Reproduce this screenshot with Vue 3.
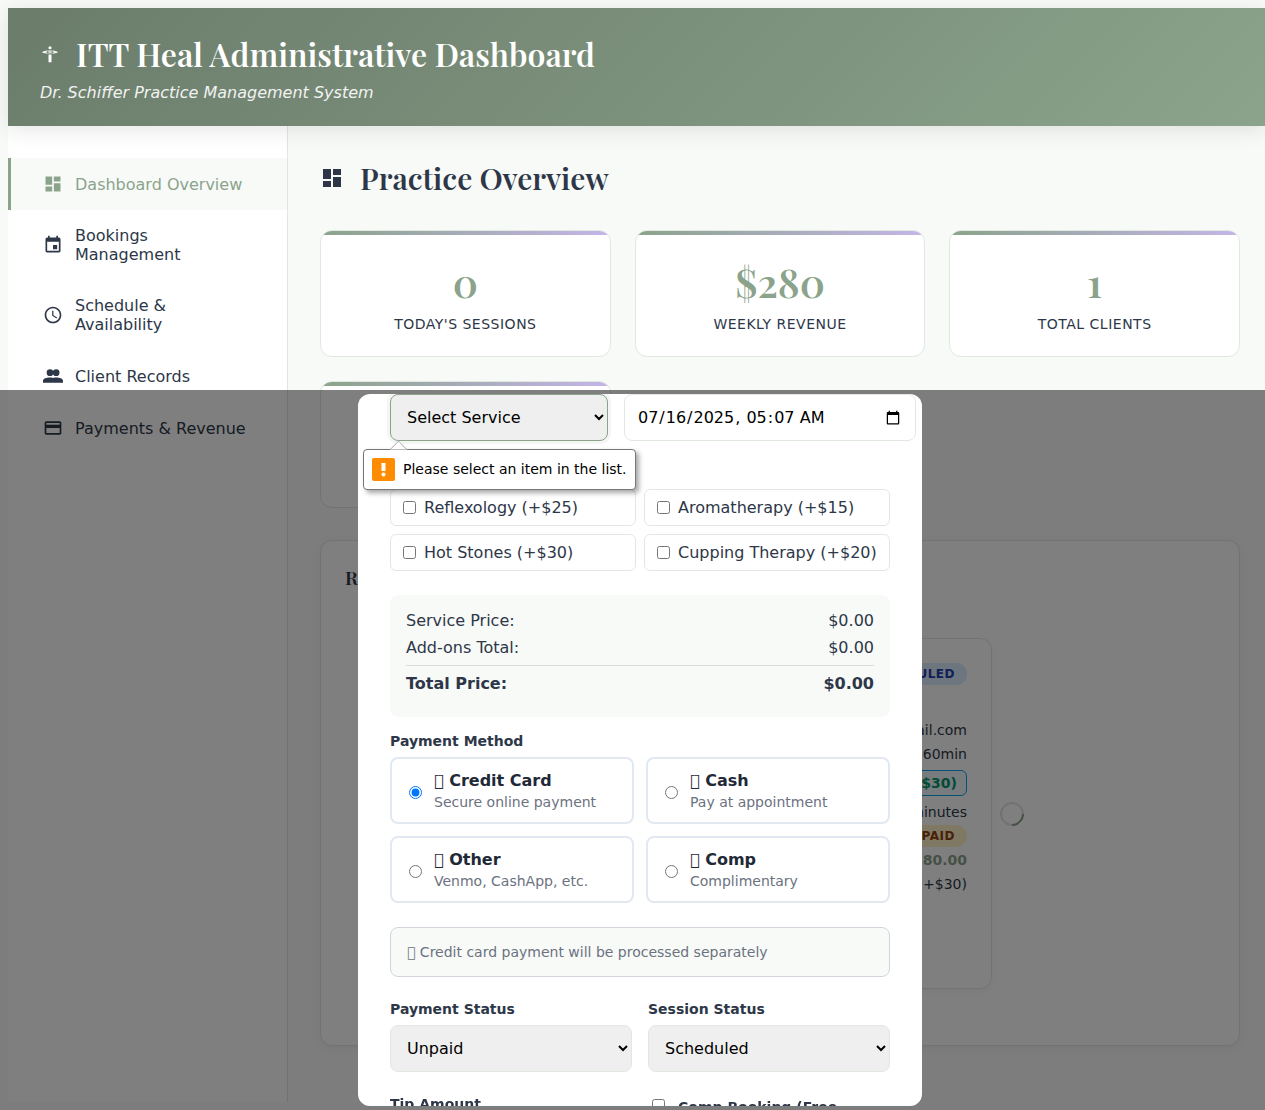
<script setup>
import { ref } from 'vue'

const icons = {
  dashboard: 'M3 13h8V3H3v10zm0 8h8v-6H3v6zm10 0h8V11h-8v10zm0-18v6h8V3h-8z',
  event: 'M17 12h-5v5h5v-5zM16 1v2H8V1H6v2H5c-1.11 0-1.99.9-1.99 2L3 19c0 1.1.89 2 2 2h14c1.1 0 2-.9 2-2V5c0-1.1-.9-2-2-2h-1V1h-2zm3 18H5V8h14v11z',
  clock: 'M11.99 2C6.47 2 2 6.48 2 12s4.47 10 9.99 10C17.52 22 22 17.52 22 12S17.52 2 11.99 2zM12 20c-4.42 0-8-3.58-8-8s3.58-8 8-8 8 3.58 8 8-3.58 8-8 8zm.5-13H11v6l5.25 3.15.75-1.23-4.5-2.67z',
  people: 'M8.400 4a4 4 0 1 0 0 8 4 4 0 0 0 0-8zM15.800 4a4 4 0 1 0 0 8 4 4 0 0 0 0-8zM0 20v-2.200c0-2.600 4-4 8-4 1.600 0 3 .2 4 .6 1-.4 2.400-.6 4-.6 4 0 8 1.400 8 4V20z',
  card: 'M20 4H4c-1.110 0-1.990.89-1.990 2L2 18c0 1.110.89 2 2 2h16c1.110 0 2-.89 2-2V6c0-1.110-.89-2-2-2zm0 14H4v-6h16v6zm0-10H4V6h16v2z'
}

const nav = [
  { label: 'Dashboard Overview', icon: icons.dashboard },
  { label: 'Bookings Management', icon: icons.event },
  { label: 'Schedule & Availability', icon: icons.clock },
  { label: 'Client Records', icon: icons.people },
  { label: 'Payments & Revenue', icon: icons.card }
]
const stats = [
  { value: '0', label: "Today's Sessions" },
  { value: '$280', label: 'Weekly Revenue' },
  { value: '1', label: 'Total Clients' },
  { value: '', label: '' }
]
const addons = ['Reflexology (+$25)', 'Aromatherapy (+$15)', 'Hot Stones (+$30)', 'Cupping Therapy (+$20)']
const glyph = '\u{F8FE}'
const methods = [
  { id: 'card', title: 'Credit Card', note: 'Secure online payment' },
  { id: 'cash', title: 'Cash', note: 'Pay at appointment' },
  { id: 'other', title: 'Other', note: 'Venmo, CashApp, etc.' },
  { id: 'comp', title: 'Comp', note: 'Complimentary' }
]
const method = ref('card')
const when = ref('2025-07-16T05:07')
</script>

<template>
  <div class="page">
    <header class="banner">
      <h1>
        <svg class="cross" viewBox="0 0 24 24" aria-hidden="true">
          <circle cx="12" cy="4.500" r="1.900" />
          <path d="M10.200 12.500h3.600V22h-3.600zM10.200 7.500h1.400v4h-1.400zM12.400 7.500h1.400v4h-1.400z" />
          <path d="M3 9.200l6-1.700v1.400L6 9.500l3 .9v1.300l-6-1.300zM21 9.200l-6-1.700v1.400l3 .6-3 .9v1.300l6-1.300z" />
        </svg>
        ITT Heal Administrative Dashboard
      </h1>
      <p>Dr. Schiffer Practice Management System</p>
    </header>

    <div class="layout">
      <nav class="sidebar">
        <a v-for="(item, i) in nav" :key="item.label" href="#" class="nav-item" :class="{ active: i === 0 }">
          <svg viewBox="0 0 24 24" aria-hidden="true"><path :d="item.icon" /></svg>
          <span>{{ item.label }}</span>
        </a>
      </nav>

      <main class="content">
        <h2>
          <svg viewBox="0 0 24 24" aria-hidden="true"><path :d="icons.dashboard" /></svg>
          Practice Overview
        </h2>
        <div class="stats">
          <div v-for="(s, i) in stats" :key="i" class="stat">
            <div class="value">{{ s.value }}</div>
            <div class="caption">{{ s.label }}</div>
          </div>
        </div>

        <section class="recent">
          <h3>Recent Bookings</h3>
          <div class="recent-body">
            <article class="booking">
              <div class="booking-head"><span class="badge scheduled">Scheduled</span></div>
              <div class="line">client@gmail.com</div>
              <div class="line">60min</div>
              <div class="line addon"><span>Hot Stones (+$30)</span></div>
              <div class="line">60 minutes</div>
              <div class="line"><span class="badge unpaid">Unpaid</span></div>
              <div class="line amount">$280.00</div>
              <div class="line">Hot Stones (+$30)</div>
            </article>
            <div class="spinner"></div>
          </div>
        </section>
      </main>
    </div>

    <div class="overlay">
      <form class="modal" @submit.prevent>
        <div class="service-row">
          <div class="service">
            <select aria-label="Service" class="field focused"><option>Select Service</option></select>
            <div class="tip" role="alert">
              <span class="tip-icon">
                <svg viewBox="0 0 23 23" aria-hidden="true"><path d="M9.500 5h4v8h-4z" /><circle cx="11.500" cy="16.500" r="2" /></svg>
              </span>
              Please select an item in the list.
            </div>
          </div>
          <input v-model="when" aria-label="Date and time" class="field when" type="datetime-local" />
        </div>

        <div class="addons" role="group" aria-label="Add-ons">
          <label v-for="a in addons" :key="a" class="addon-box"><input type="checkbox" />{{ a }}</label>
        </div>

        <div class="totals">
          <div><span>Service Price:</span><span>$0.00</span></div>
          <div><span>Add-ons Total:</span><span>$0.00</span></div>
          <div class="total"><span>Total Price:</span><span>$0.00</span></div>
        </div>

        <div class="group">
          <span class="label">Payment Method</span>
          <div class="methods">
            <label v-for="m in methods" :key="m.id" class="method">
              <input v-model="method" type="radio" name="method" :value="m.id" />
              <span>
                <strong><span class="glyph">{{ glyph }}</span> {{ m.title }}</strong>
                <small>{{ m.note }}</small>
              </span>
            </label>
          </div>
        </div>

        <div class="notice">{{ glyph }} Credit card payment will be processed separately</div>

        <div class="pair">
          <div>
            <label class="label" for="payment-status">Payment Status</label>
            <select id="payment-status" class="field"><option>Unpaid</option></select>
          </div>
          <div>
            <label class="label" for="session-status">Session Status</label>
            <select id="session-status" class="field"><option>Scheduled</option></select>
          </div>
        </div>

        <div class="pair">
          <div>
            <label class="label" for="tip-amount">Tip Amount</label>
            <input id="tip-amount" class="field" type="number" />
          </div>
          <label class="comp"><input type="checkbox" />Comp Booking (Free</label>
        </div>
      </form>
    </div>
  </div>
</template>

<style>
html, body { background: #f8faf8; }
body { overflow: hidden; }
</style>

<style scoped>
* { box-sizing: border-box; }
.page {
  display: flex;
  flex-direction: column;
  min-height: 100vh;
  padding: 8px 0 8px 8px;
  font-family: "DejaVu Sans", sans-serif;
  font-size: 16px;
  line-height: 19px;
  color: #2d3748;
}
svg { flex: none; fill: currentColor; }
h1, h2, h3, p { margin: 0; }
h1, h2, h3, .value { font-family: "Playfair Display", "Liberation Serif", serif; font-weight: 600; }

.banner {
  position: relative;
  padding: 24px 32px;
  color: #fff;
  background: linear-gradient(135deg, #6b7c6b 0%, #8ba38b 100%);
  box-shadow: 0 4px 20px rgba(0, 0, 0, 0.1);
}
h1 {
  display: flex;
  align-items: center;
  gap: 16px;
  font-size: 32px;
  line-height: 43px;
}
.cross { width: 20px; height: 20px; }
.banner p { margin-top: 8px; font-style: italic; opacity: 0.9; }

.layout { display: flex; flex: 1; }
.sidebar {
  flex: none;
  width: 280px;
  padding-top: 32px;
  background: #fff;
  border-right: 1px solid #e2e6e2;
}
.nav-item {
  display: flex;
  align-items: center;
  gap: 12px;
  padding: 16px 32px;
  border-left: 3px solid transparent;
  color: #2d3748;
  text-decoration: none;
}
.nav-item svg { width: 20px; height: 20px; }
.nav-item.active { background: #f8faf8; border-left-color: #8ba38b; color: #8ba38b; }

.content { flex: 1; padding: 32px 25px 32px 32px; }
h2 {
  display: flex;
  align-items: center;
  gap: 16px;
  margin-bottom: 32px;
  font-size: 30px;
  line-height: 40px;
}
h2 svg { width: 24px; height: 24px; }
.stats { display: grid; grid-template-columns: repeat(3, 1fr); gap: 24px; }
.stat {
  position: relative;
  height: 127px;
  padding: 24px;
  overflow: hidden;
  text-align: center;
  background: #fff;
  border: 1px solid #e0e8e0;
  border-radius: 12px;
}
.stat::before {
  content: "";
  position: absolute;
  inset: 0 0 auto;
  height: 4px;
  background: linear-gradient(90deg, #8ba38b, #c4b5e8);
}
.value { height: 53px; margin-bottom: 8px; font-size: 40px; line-height: 53px; color: #8ba38b; }
.caption { font-size: 14px; line-height: 17px; letter-spacing: 0.5px; text-transform: uppercase; }

.recent {
  margin-top: 32px;
  padding: 24px;
  height: 506px;
  background: #fff;
  border: 1px solid #e0e8e0;
  border-radius: 12px;
  box-shadow: 0 2px 10px rgba(0, 0, 0, 0.05);
}
h3 { font-size: 19px; line-height: 25px; }
.recent-body { display: flex; justify-content: center; align-items: center; gap: 8px; margin-top: 48px; }
.booking {
  width: 456px;
  height: 351px;
  padding: 24px;
  border: 1px solid #e0e8e0;
  border-radius: 12px;
  box-shadow: 0 2px 10px rgba(0, 0, 0, 0.05);
  text-align: right;
  font-size: 14px;
}
.booking-head { display: flex; justify-content: flex-end; margin-bottom: 37px; }
.line { display: flex; justify-content: flex-end; align-items: center; height: 16px; margin-bottom: 8px; }
.line.addon { height: 26px; }
.line.addon span {
  padding: 3px 9px;
  line-height: 18px;
  font-weight: 700;
  color: #059669;
  background: #f0f9ff;
  border: 1px solid #0ea5e9;
  border-radius: 6px;
}
.badge {
  padding: 4px 12px;
  font-size: 12px;
  line-height: 14px;
  font-weight: 700;
  letter-spacing: 0.5px;
  text-transform: uppercase;
  border-radius: 12px;
}
.scheduled { background: #dbeafe; color: #1e40af; }
.unpaid { background: #fef3c7; color: #92400e; }
.amount { font-weight: 700; color: #8ba38b; }
.spinner {
  width: 24px;
  height: 24px;
  border: 2px solid #e0e4e0;
  border-top-color: #8ba38b;
  border-radius: 50%;
  transform: rotate(135deg);
}

.overlay {
  position: fixed;
  inset: 390px 0 0 0;
  display: flex;
  justify-content: center;
  padding: 4px 0 4px 15px;
  background: rgba(0, 0, 0, 0.5);
}
.modal {
  width: 564px;
  height: 100%;
  padding: 0 32px;
  overflow: hidden;
  background: #fff;
  border-radius: 12px;
}
.field {
  display: block;
  width: 100%;
  height: 47px;
  padding: 12px;
  font: inherit;
  color: #000;
  border: 1px solid #e0e8e0;
  border-radius: 8px;
}
select.field { background-color: #efefef; }
.field.focused { border-color: #8ba38b; box-shadow: 0 0 0 3px rgba(139, 163, 139, 0.1); }
.service-row { display: flex; gap: 16px; margin-bottom: 48px; }
.service { position: relative; flex: none; width: 218px; }
.when { flex: none; width: 292px; background: #fff; }
.tip {
  position: absolute;
  top: 55px;
  left: -27px;
  display: flex;
  align-items: center;
  gap: 8px;
  height: 41px;
  padding: 0 8px;
  font-size: 14px;
  white-space: nowrap;
  color: #000;
  background: #fff;
  border: 1px solid #777;
  border-radius: 4px;
  box-shadow: 3px 3px 5px rgba(0, 0, 0, 0.35);
}
.tip::before {
  content: "";
  position: absolute;
  top: -7px;
  left: 28px;
  width: 12px;
  height: 12px;
  background: #fff;
  border: solid #aaa;
  border-width: 1px 0 0 1px;
  transform: rotate(45deg);
  clip-path: polygon(0 0, 100% 0, 0 100%);
}
.tip-icon { width: 23px; height: 23px; background: #ff8c00; border-radius: 2px; color: #fff; }
.tip-icon svg { display: block; width: 23px; height: 23px; }

.label { display: block; margin-bottom: 8px; font-size: 14px; line-height: 16px; font-weight: 700; }
.group { margin-bottom: 24px; }
.addons { display: grid; grid-template-columns: 1fr 1fr; gap: 8px; margin-bottom: 24px; }
.addon-box {
  display: flex;
  align-items: center;
  gap: 8px;
  height: 37px;
  padding: 0 12px;
  white-space: nowrap;
  border: 1px solid #e0e8e0;
  border-radius: 6px;
}
input[type="checkbox"], input[type="radio"] { flex: none; width: 13px; height: 13px; margin: 0; }
.totals { margin-bottom: 16px; padding: 16px; background: #f8faf8; border-radius: 8px; }
.totals div { display: flex; justify-content: space-between; margin-bottom: 8px; }
.totals .total { padding-top: 8px; border-top: 1px solid #d8e0d8; font-weight: 700; }
.methods { display: grid; grid-template-columns: 1fr 1fr; gap: 12px; }
.method {
  display: flex;
  align-items: center;
  gap: 12px;
  padding: 12px 17px;
  border: 2px solid #e2e8f0;
  border-radius: 8px;
}
.method input[type="radio"] { margin-top: 4px; }
.method strong { display: block; height: 19px; color: #1f2937; }
.glyph { font-weight: 400; }
.method small { display: block; margin-top: 4px; font-size: 14px; line-height: 16px; color: #6b7280; }
.notice {
  height: 50px;
  margin-bottom: 24px;
  padding: 16px;
  font-size: 14px;
  line-height: 16px;
  color: #6b7280;
  background: #f8faf8;
  border: 1px solid #d1d5db;
  border-radius: 8px;
}
.pair { display: grid; grid-template-columns: 1fr 1fr; gap: 16px; margin-bottom: 24px; }
.comp {
  display: flex;
  align-items: flex-start;
  gap: 13px;
  padding: 3px 4px;
  font-size: 14px;
  line-height: 16px;
  font-weight: 700;
}
</style>
